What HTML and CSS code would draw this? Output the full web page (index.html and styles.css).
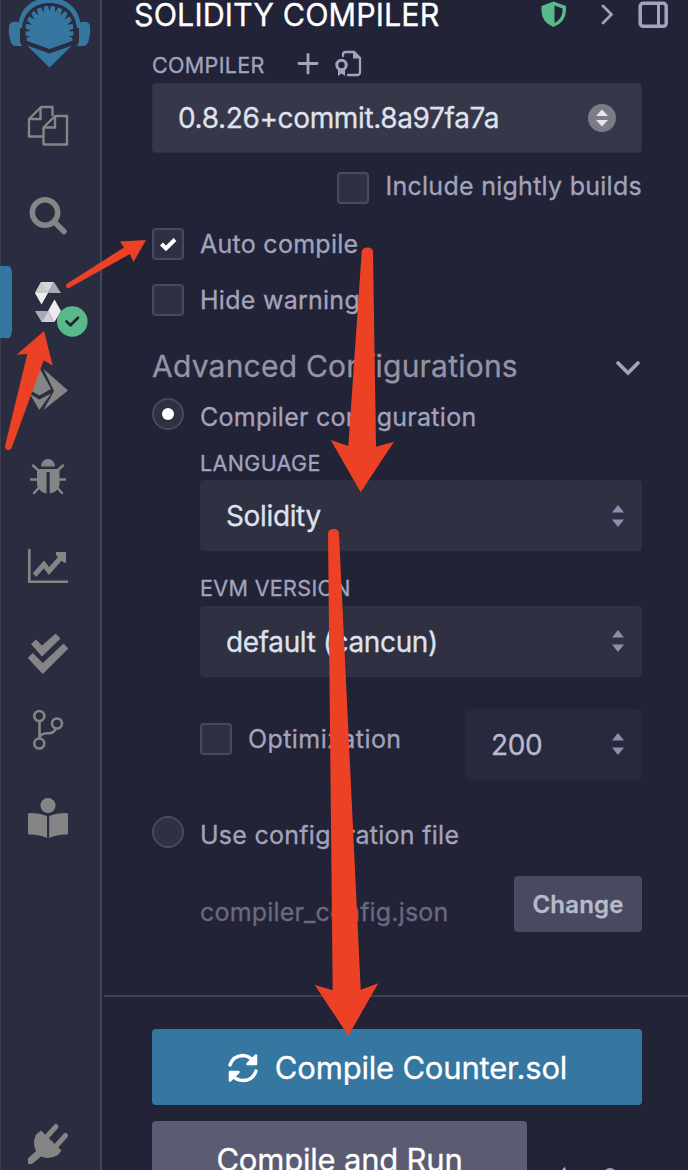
FILE: index.html
```html
<!DOCTYPE html>
<html lang="en">
<head>
<meta charset="utf-8">
<title>Solidity Compiler</title>
<link rel="stylesheet" href="styles.css">
</head>
<body>
<div class="app">
  <nav class="sidebar">
    <svg class="slot" height="82" viewBox="0 0 100 82">
      <g fill="#3577a1">
        <path d="M18 28C19 8 32-2 49.500-2S80 8 81 28H77C75 12 65 3 49.500 3S24 12 22 28Z"/>
        <path d="M13 22Q17 21 20 23V42L22 46H15Q11 45 10 39Q8 32 9 26Q10 22 13 22ZM86 22Q82 21 79 23V42L77 46H84Q88 45 89 39Q91 32 90 26Q89 22 86 22Z"/>
        <path d="M27 41Q25 35 25.500 29C26 15 36 6 49.500 6S73 15 73.500 29Q74 35 72 41L49.500 49Z"/>
        <path d="M27 45.500L49.500 53.500L72 45.500L49.500 67.500Z"/>
      </g>
      <path d="M47.800 5L49.500 11L51.200 5ZM40.500 7L44 12.500L43.800 5.500ZM58.500 7L55 12.500L55.200 5.500ZM33.500 10.500L38.500 15.500L36.500 8.500ZM65.500 10.500L60.500 15.500L62.500 8.500ZM28.500 16L34.500 19.500L31 13ZM70.500 16L64.500 19.500L68 13ZM25 23.500L32 25L26.500 20ZM74 23.500L67 25L72.500 20ZM24.500 31.500L31 31L24.500 28ZM74.500 31.500L68 31L74.500 28ZM25 38.500L30.500 36.500L24.500 35.500ZM74 38.500L68.500 36.500L74.500 35.500Z" fill="#2a2c3f"/>
    </svg>
    <svg class="slot" height="88" viewBox="0 82 100 88" fill="none" stroke="#858585" stroke-width="2.400" stroke-linejoin="round">
      <path d="M43 136.500H29V119L41 107H52.500V116M29 119H40.500V107"/>
      <path d="M43.500 144.500V127.500L55 116H67V144.500ZM43.500 127.500H55V116"/>
    </svg>
    <svg class="slot" height="88" viewBox="0 170 100 88" fill="none" stroke="#858585">
      <circle cx="45" cy="212.500" r="12.700" stroke-width="5.500"/>
      <path d="M55 222.500L64 231.500" stroke-width="5.500" stroke-linecap="round"/>
    </svg>
    <svg class="slot" height="88" viewBox="0 258 100 88">
      <path d="M0 266H9Q12 268 12 275V329Q12 336 9 338H0Z" fill="#3577a1"/>
      <path d="M41 282H54L48 293H35Z" fill="#d6d6da"/>
      <path d="M54 282L61 293H48Z" fill="#aaaab5"/>
      <path d="M41 282L48 293H35Z" fill="#c8c8cd"/>
      <path d="M35 293H48L41.500 304.500Z" fill="#ededf0"/>
      <path d="M35 311H48L41.500 322Z" fill="#aaaab5"/>
      <path d="M48 311L54.500 299.500L61 311L54.500 322Z" fill="#ededf0"/>
      <path d="M48 311L54.500 322H41.500Z" fill="#ceced4"/>
      <circle cx="72.300" cy="321.500" r="15.300" fill="#59b98b"/>
      <path d="M66.500 321.500L70.500 325.300L78 317.800" fill="none" stroke="#222336" stroke-width="2.700" stroke-linecap="round" stroke-linejoin="round"/>
    </svg>
    <svg class="slot" height="88" viewBox="0 346 100 88" fill="#858585">
      <path d="M39.500 368L51 389L39.300 395.500L28 389Z"/>
      <path d="M30 394L39.300 399.500L51 393.500L39.300 410Z"/>
      <path d="M43.500 369L68 390.500L43.500 410L54 391Z"/>
    </svg>
    <svg class="slot" height="88" viewBox="0 434 100 88" fill="#858585">
      <path d="M41 466.500a7 7.600 0 0 1 14 0Z"/>
      <path d="M37 469H59.500V485Q58 492 49.700 493.500V472H46.500V493.500Q39 492 37 485Z"/>
      <path d="M33 465.500L38 470M63 465.500L58 470M31 479.500H37M65 479.500H59M34 493L39 487.500M62 493L57 487.500" stroke="#858585" stroke-width="2.500" stroke-linecap="round"/>
    </svg>
    <svg class="slot" height="88" viewBox="0 522 100 88">
      <path d="M29.300 549V581.700H68" fill="none" stroke="#858585" stroke-width="2.600"/>
      <path d="M34.500 575L44 564.500L49 571L61 557.500" fill="none" stroke="#858585" stroke-width="5"/>
      <path d="M56 552H66V563L63 562L56 555Z" fill="#858585"/>
    </svg>
    <svg class="slot" height="82" viewBox="0 610 100 82" fill="#858585" stroke="#858585" stroke-width="1.500" stroke-linejoin="round">
      <path d="M32 644L36 640.500L42 646.500L55.500 634.500L59.500 638.500L42 655.500Z"/>
      <path d="M28.800 658L32.800 654L42.800 664L63.500 644.500L67.300 648.500L42.800 673Z"/>
    </svg>
    <svg class="slot" height="88" viewBox="0 692 100 88" fill="none" stroke="#858585" stroke-width="2.600">
      <circle cx="39.300" cy="716" r="5"/><circle cx="57" cy="723.500" r="5"/><circle cx="39.300" cy="743.500" r="5"/>
      <path d="M39.500 721V738M56 728.500Q53.500 733.300 49 733.300C43 733 39.700 735 39.500 738.500"/>
    </svg>
    <svg class="slot" height="80" viewBox="0 780 100 80" fill="#858585">
      <circle cx="48" cy="805.500" r="7.600"/>
      <path d="M29.500 813Q40 813 47 816V838Q40 834.500 29.500 834.500Q28 834.500 28 833V814.500Q28 813 29.500 813ZM66.500 813Q56 813 49.200 816V838Q56 834.500 66.500 834.500Q68 834.500 68 833V814.500Q68 813 66.500 813Z"/>
    </svg>
    <svg class="slot plug" height="60" viewBox="0 1110 100 60">
      <path d="M28 1158.500L36 1151Q32 1143 36 1134.500L41 1130.500L61.500 1150.500L58 1155Q49 1160 41 1156.500L32 1164H28Z" fill="#858585"/>
      <path d="M47.500 1136L56 1126.500M57 1145L65.500 1135.500" stroke="#858585" stroke-width="5" stroke-linecap="round"/>
    </svg>
  </nav>

  <main class="panel">
    <header class="header">
      <h1 class="title">SOLIDITY COMPILER</h1>
      <svg width="156" height="44" viewBox="532 0 156 44" fill="none" stroke="#a2a3bd">
        <path d="M553.500 1.500L566 6V11Q565.500 22 553.500 27Q541.500 22 541.500 11V6Z" fill="#59b98b" stroke="none"/>
        <path d="M554.500 5.500L562.500 8.500V11Q562 19 554.500 23Z" fill="#222336" stroke="none"/>
        <path d="M603 6L611.500 14.500L603 23" stroke-width="2.800" stroke-linecap="round" stroke-linejoin="round"/>
        <rect x="640.200" y="3.300" width="26" height="23" rx="3" stroke-width="3.500"/>
        <path d="M658.500 3V26" stroke-width="3"/>
      </svg>
    </header>

    <div class="compiler-label">
      <span class="label compiler-name">COMPILER</span>
      <svg width="66" height="39" viewBox="297 44 66 39" fill="none" stroke="#a2a3bd" stroke-width="2.800" stroke-linecap="round">
        <path d="M299 63.500H317M308 54.500V73"/>
        <path d="M343 56V54.500Q343 52 346 52H354L360 58V72Q360 75 357 75H348" stroke-width="2.300"/>
        <path d="M353 51V58.500H361Z" fill="#a2a3bd" stroke="none"/>
        <circle cx="341.500" cy="65" r="4.700" stroke-width="3"/>
        <path d="M338 69V76L341.500 73.500L345 76V69Z" fill="#a2a3bd" stroke="none"/>
      </svg>
    </div>

    <div class="select version">
      <span>0.8.26+commit.8a97fa7a</span>
      <svg width="28" height="28" viewBox="0 0 28 28"><circle cx="14" cy="14" r="14" fill="#7b7c87"/><path d="M8 12L14 5.500L20 12ZM8 16L14 22.500L20 16Z" fill="#e4e5ec"/></svg>
    </div>

    <label class="row nightly"><span class="box"></span><span class="text">Include nightly builds</span></label>
    <label class="row"><span class="box"><svg width="28" height="28" viewBox="0 0 28 28"><path d="M7.500 14L12 18.500L21 9.500" fill="none" stroke="#fff" stroke-width="4"/></svg></span><span class="text">Auto compile</span></label>
    <label class="row"><span class="box"></span><span class="text">Hide warning</span></label>

    <div class="advanced">
      <h2 class="advanced-title">Advanced Configurations</h2>
      <svg width="28" height="20" viewBox="0 0 28 20"><path d="M4 6L14 16L24 6" fill="none" stroke="#a2a3bd" stroke-width="3.700" stroke-linecap="round"/></svg>
    </div>
    <label class="row radio-row"><span class="box round"><i class="dot"></i></span><span class="text">Compiler configuration</span></label>

    <section class="config">
      <div class="label field-label">LANGUAGE</div>
      <div class="select"><span>Solidity</span><svg width="12" height="24" viewBox="0 0 12 24"><path d="M0 8.500L6 1L12 8.500ZM0 15.500L6 23L12 15.500Z" fill="#8b90b0"/></svg></div>
      <div class="label field-label evm">EVM VERSION</div>
      <div class="select"><span>default (cancun)</span><svg class="raised" width="12" height="24" viewBox="0 0 12 24"><path d="M0 8.500L6 1L12 8.500ZM0 15.500L6 23L12 15.500Z" fill="#8b90b0"/></svg></div>
      <div class="optimize">
        <label class="opt"><span class="box"></span><span class="text optimization">Optimization</span></label>
        <div class="select runs"><span>200</span><svg class="raised" width="12" height="24" viewBox="0 0 12 24"><path d="M0 8.500L6 1L12 8.500ZM0 15.500L6 23L12 15.500Z" fill="#8b90b0"/></svg></div>
      </div>
    </section>

    <label class="row file-radio"><span class="box round"></span><span class="text">Use configuration file</span></label>
    <div class="file">
      <span class="text file-name">compiler_config.json</span>
      <span class="change">Change</span>
    </div>

    <footer class="footer">
      <div class="button primary">
        <svg width="32" height="30" viewBox="0 0 32 30" fill="none" stroke="#fff" stroke-width="3.400" stroke-linecap="round" stroke-linejoin="round">
          <path d="M3 12Q6 3 15.500 2.500Q22 2.500 26 8M29 18Q26 27 16.500 27.500Q9 27.500 5 22"/>
          <path d="M29 2.500V11H20.500ZM3 27.500V19H11.500Z" fill="#fff" stroke-width="2.500"/>
        </svg>
        <span>Compile Counter.sol</span>
      </div>
      <div class="run-line">
        <div class="button secondary"><span>Compile and Run</span></div>
        <svg width="60" height="49" viewBox="560 1121 60 49" fill="none" stroke="#a2a3bd" stroke-width="2"><path d="M563 1170L564.500 1168.500L565 1170M605 1171.500Q610 1166.500 615 1171.500"/></svg>
      </div>
    </footer>
  </main>

  <svg class="arrows" width="688" height="1170" viewBox="0 0 688 1170" fill="#ec4125">
    <path d="M66.500 284L124 247.500L120 241.500L146 240L133.500 262L130 254L69 288Q65 289 66.500 284Z"/>
    <path d="M44 331L16.700 354.700L27.300 354L5 446Q5 450 8.500 450Q11 450 12 447L43.700 360.300L52.700 365.700Z"/>
    <path d="M361.700 252Q362 247.500 367.500 247.500Q373 247.500 373 252L376 446.700L394 441.700L360.700 492.300L330.700 440L348.300 446Z"/>
    <path d="M328 534Q328 529 333.500 529Q339 529 339 534L360.700 989.700L378.300 983.300L348.300 1035.700L314.700 985L332.700 990.300Z"/>
  </svg>
</div>
</body>
</html>
```
FILE: styles.css
```css
* { box-sizing: border-box; }
body { margin: 0; background: #222336; font-family: Inter, "Liberation Sans", sans-serif; color: #a2a3bd; -webkit-text-stroke: 0.3px currentColor; }
svg { display: block; flex: none; }
h1, h2 { margin: 0; font-weight: 400; }
span { white-space: nowrap; }

.app { position: relative; display: flex; width: 688px; height: 1170px; overflow: hidden; }
.sidebar { display: flex; flex-direction: column; flex: none; width: 102px; height: 1170px; background: #2a2c3f; border-right: 2px solid #444558; box-shadow: inset 1px 0 #3b3d50; }
.slot { width: 100px; }
.plug { margin-top: auto; }
.panel { flex: 1; min-width: 0; }
.arrows { position: absolute; left: 0; top: 0; }

.header { display: flex; justify-content: space-between; height: 44px; padding-left: 32px; }
.title { font-size: 30.5px; line-height: 30px; color: #fff; letter-spacing: 0.08px; white-space: nowrap; }
.compiler-label { display: flex; align-items: center; height: 39px; padding-left: 50px; }
.label { font-size: 21.5px; line-height: 26px; letter-spacing: 0.35px; white-space: nowrap; }
.compiler-name { width: 145px; padding-top: 3px; }

.select { display: flex; align-items: center; justify-content: space-between; height: 71px; padding: 0 18px 0 26px; border-radius: 4px; background: #2f3042; color: #dfe1ee; font-size: 28px; line-height: 34px; letter-spacing: -0.36px; }
.version { height: 70px; margin: 0 46px 0 50px; padding-right: 25px; background: #363749; border: 1px solid #303144; padding-left: 25px; }
.raised { margin-top: -2px; }

.row { display: flex; align-items: center; height: 56px; gap: 16px; padding-left: 50px; }
.text { font-size: 25px; line-height: 32px; letter-spacing: 0.27px; }
.box { display: flex; align-items: center; justify-content: center; flex: none; width: 32px; height: 32px; border: 2px solid #494a5d; border-radius: 4px; background: #2f3042; }
.round { border-radius: 50%; }
.dot { width: 12px; height: 12px; border-radius: 50%; background: #fff; }
.nightly { justify-content: flex-end; height: 63px; padding: 7px 46px 0 0; }
.nightly .text { margin-top: -4px; }

.advanced { display: flex; align-items: center; justify-content: space-between; height: 66px; padding: 12px 46px 0 50px; }
.advanced-title { margin-top: -2px; font-size: 30px; line-height: 36px; letter-spacing: 0.22px; color: #9394a6; }
.radio-row { height: 40px; }
.radio-row .text, .file-radio .text { padding-top: 6px; }

.config { padding: 0 46px 0 98px; }
.field-label { height: 46px; padding-top: 16px; }
.evm { height: 55px; padding-top: 24px; }
.optimize { display: flex; justify-content: space-between; margin-top: 32px; }
.opt { display: flex; align-items: center; gap: 16px; height: 60px; }
.optimization { letter-spacing: 0.42px; }
.runs { width: 177px; background: #28293c; color: #b9bacd; }

.file-radio { height: 56px; margin-top: 24px; }
.file { display: flex; align-items: center; justify-content: space-between; height: 56px; margin-top: 16px; padding: 0 46px 0 98px; }
.file-name { padding-top: 16px; color: #696a7e; letter-spacing: 0.18px; }
.change { display: flex; align-items: center; justify-content: center; width: 128px; height: 56px; border-radius: 4px; background: #494961; color: #b9bac9; font-size: 24px; font-weight: 600; letter-spacing: 0.2px; }

.footer { margin: 63px 0 0 2px; padding: 32px 46px 0 48px; border-top: 2px solid #3e3f52; }
.button { display: flex; align-items: center; justify-content: center; border-radius: 4px; color: #fff; font-size: 31px; line-height: 38px; letter-spacing: -0.2px; }
.primary { gap: 16px; height: 76px; padding-top: 1px; background: #3577a1; }
.run-line { display: flex; margin-top: 16px; }
.secondary { width: 375px; height: 76px; margin-right: 33px; padding-top: 1px; background: #5b5c74; }
```
